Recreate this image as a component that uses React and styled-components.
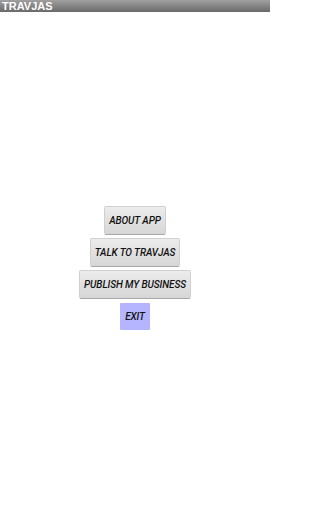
import React from "react";
import styled, { createGlobalStyle } from "styled-components";

const GlobalStyle = createGlobalStyle`
  html, body {
    margin: 0;
    padding: 0;
    background: #fff;
    font-family: Roboto, "Liberation Sans", sans-serif;
  }
`;

const Screen = styled.div`
  width: 270px;
  height: 512px;
  background: #fff;
  display: flex;
  flex-direction: column;
`;

const TitleBar = styled.div`
  height: 12px;
  background: linear-gradient(#a0a0a0, #6a6a6a);
  color: #fff;
  font-size: 11px;
  font-weight: bold;
  line-height: 12px;
  padding-left: 2px;
  font-family: "Liberation Sans", Arial, sans-serif;
`;

const Menu = styled.div`
  display: flex;
  flex-direction: column;
  align-items: center;
  gap: 5px;
  padding-top: 195px;
`;

const Button = styled.button`
  height: 27px;
  padding: ${(p) => (p.$accent ? "0 5px" : "0 4px")};
  border: none;
  border-radius: 1px;
  font-family: Roboto, "Liberation Sans", sans-serif;
  font-size: 10px;
  font-weight: 500;
  font-style: italic;
  letter-spacing: -0.1px;
  color: #111;
  background: ${(p) =>
    p.$accent ? "#b4b4ff" : "linear-gradient(#ececec, #d6d6d6)"};
  box-shadow: ${(p) =>
    p.$accent ? "none" : "0 1px 0 #a8a8a8, 0 0 0 1px #d0d0d0"};
  cursor: pointer;
`;

const App = () => {
  return (
    <Screen>
      <GlobalStyle />
      <TitleBar>TRAVJAS</TitleBar>
      <Menu>
        <Button>ABOUT APP</Button>
        <Button>TALK TO TRAVJAS</Button>
        <Button>PUBLISH MY BUSINESS</Button>
        <Button $accent>EXIT</Button>
      </Menu>
    </Screen>
  );
};

export default App;
